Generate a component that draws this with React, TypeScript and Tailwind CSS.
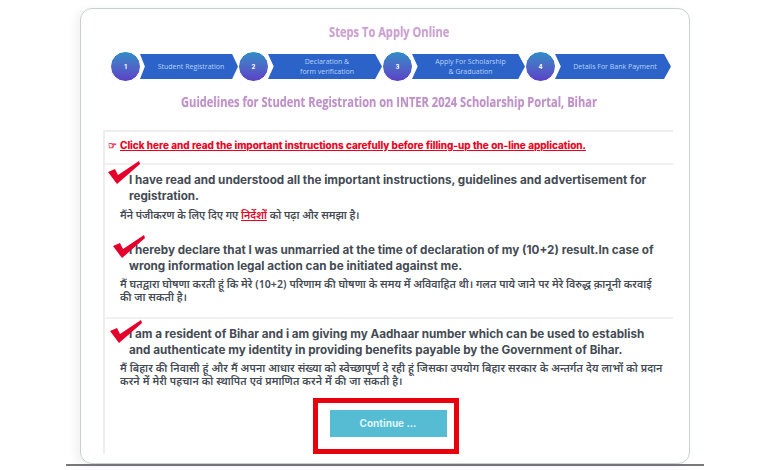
const steps = [
  { n: '1', lines: ['Student Registration'], bar: 'w-[98px]' },
  { n: '2', lines: ['Declaration &', 'form verification'], bar: 'w-[114px]' },
  { n: '3', lines: ['Apply For Scholarship', '& Graduation'], bar: 'w-[113px]' },
  { n: '4', lines: ['Details For Bank Payment'], bar: 'w-[116px]' },
];

function Tick({ className }: { className: string }) {
  return (
    <svg className={`absolute ${className}`} width="34" height="24" viewBox="0 0 34 24">
      <path d="M1 11 L8 8 L11 14 L32 0 L33 3 L10 23 Z" fill="#e4002b" />
    </svg>
  );
}

export default function App() {
  return (
    <div className="h-[470px] w-[780px] overflow-hidden bg-white font-['Inter',sans-serif]">
      <div className="mx-[66px] h-[466px] w-[638px] border-b-2 border-[#77797c] pt-2">
        <div className="mx-[14px] flex h-[456px] w-[610px] flex-col rounded-xl border border-[#c8d0d2] bg-white pt-3 shadow-[-4px_2px_10px_rgba(0,0,0,0.06)]">
          <div className="flex h-5 justify-center pl-2">
            <span className="inline-block scale-x-[0.74] font-['Open_Sans',sans-serif] text-[15px] leading-5 font-bold text-[#c9a3cf] [text-shadow:0_0_2px_#f0d8f0]">Steps To Apply Online</span>
          </div>

          <div className="mt-[9px] ml-[29px] flex h-[33px] items-center">
            {steps.map((s) => (
              <div key={s.n} className="flex items-center">
                <div className="z-10 flex h-[31px] w-[31px] shrink-0 items-center justify-center rounded-full border border-white bg-gradient-to-b from-[#2c8cc6] to-[#5a3fc6] text-[6px] font-bold text-white">{s.n}</div>
                <div className={`-ml-[1px] flex h-[25px] ${s.bar} flex-col items-center justify-center bg-[#2b63c9] pr-2 pl-3 text-center font-['Open_Sans',sans-serif] text-[7px] leading-[10px] text-[#b9d2f5] [clip-path:polygon(0_0,94%_0,100%_50%,94%_100%,0_100%,5%_50%)]`}>
                  {s.lines.map((l) => (
                    <span key={l} className="whitespace-nowrap">{l}</span>
                  ))}
                </div>
              </div>
            ))}
          </div>

          <div className="mt-2 flex h-5 justify-center pl-2">
            <span className="inline-block scale-x-[0.74] whitespace-nowrap font-['Open_Sans',sans-serif] text-[15px] leading-5 font-bold text-[#bb93c4] [text-shadow:0_0_2px_#f0d8f0]">Guidelines for Student Registration on INTER 2024 Scholarship Portal, Bihar</span>
          </div>

          <div className="mt-[19px] mr-4 ml-[22px] border-t-2 border-l-2 border-[#eeeeee]">
            <div className="flex h-[33px] items-center border-b-2 border-[#f0f0f0] pb-[5px] pl-[3px] text-[10px] font-bold">
              <span className="mr-[3px] text-[10px] text-[#e6194b]">☞</span>
              <span className="text-[#e8001f] underline [text-shadow:0_0_1px_#f5a0a8]">Click here and read the important instructions carefully before filling-up the on-line application.</span>
            </div>

            <div className="relative h-[152px] pt-[7px] text-[#444b54]">
              <Tick className="top-[-4px] left-[2px]" />
              <p className="ml-[24px] text-[11.7px] leading-4 font-bold">I have read and understood all the important instructions, guidelines and advertisement for registration.</p>
              <p className="mt-[5px] ml-[15px] font-['Noto_Sans',sans-serif] text-[10.6px] leading-[13px] font-semibold">
                मैंने पंजीकरण के लिए दिए गए <span className="text-[#e8001f] underline">निर्देशों</span> को पढ़ा और समझा है।
              </p>
              <Tick className="top-[70px] left-[7px]" />
              <p className="mt-5 ml-[24px] text-[11.7px] leading-4 font-bold">I hereby declare that I was unmarried at the time of declaration of my (10+2) result.In case of wrong information legal action can be initiated against me.</p>
              <p className="mt-1 ml-[15px] font-['Noto_Sans',sans-serif] text-[10.6px] leading-[13px] font-semibold tracking-[0.05px]">
                मैं घतद्वारा घोषणा करती हूं कि मेरे (10+2) परिणाम की घोषणा के समय में अविवाहित थी। गलत पाये जाने पर मेरे विरुद्ध क़ानूनी करवाई
                <br />
                की जा सकती है।
              </p>
            </div>

            <div className="relative border-t-2 border-[#f0f0f0] pt-[7px] text-[#444b54]">
              <Tick className="top-[1px] left-[4px]" />
              <p className="ml-[24px] text-[11.7px] leading-4 font-bold">
                I am a resident of Bihar and i am giving my Aadhaar number which can be used to establish
                <br />
                and authenticate my identity in providing benefits payable by the Government of Bihar.
              </p>
              <p className="mt-1 ml-[15px] font-['Noto_Sans',sans-serif] text-[10.6px] leading-[13px] font-semibold tracking-[0.14px]">
                मैं बिहार की निवासी हूं और मैं अपना आधार संख्या को स्वेच्छापूर्ण दे रही हूं जिसका उपयोग बिहार सरकार के अन्तर्गत देय लाभों को प्रदान
                <br />
                करने में मेरी पहचान को स्थापित एवं प्रमाणित करने में की जा सकती है।
              </p>
              <div className="mt-[10px] ml-[208px] flex h-[56px] w-[146px] items-center justify-center border-[5px] border-[#e8000d] pb-[6px] pl-1">
                <button type="button" className="h-[27px] w-[117px] bg-[#55bcd3] text-[10px] font-bold text-[#dff4f8]">Continue ...</button>
              </div>
            </div>
          </div>
        </div>
      </div>
    </div>
  );
}
